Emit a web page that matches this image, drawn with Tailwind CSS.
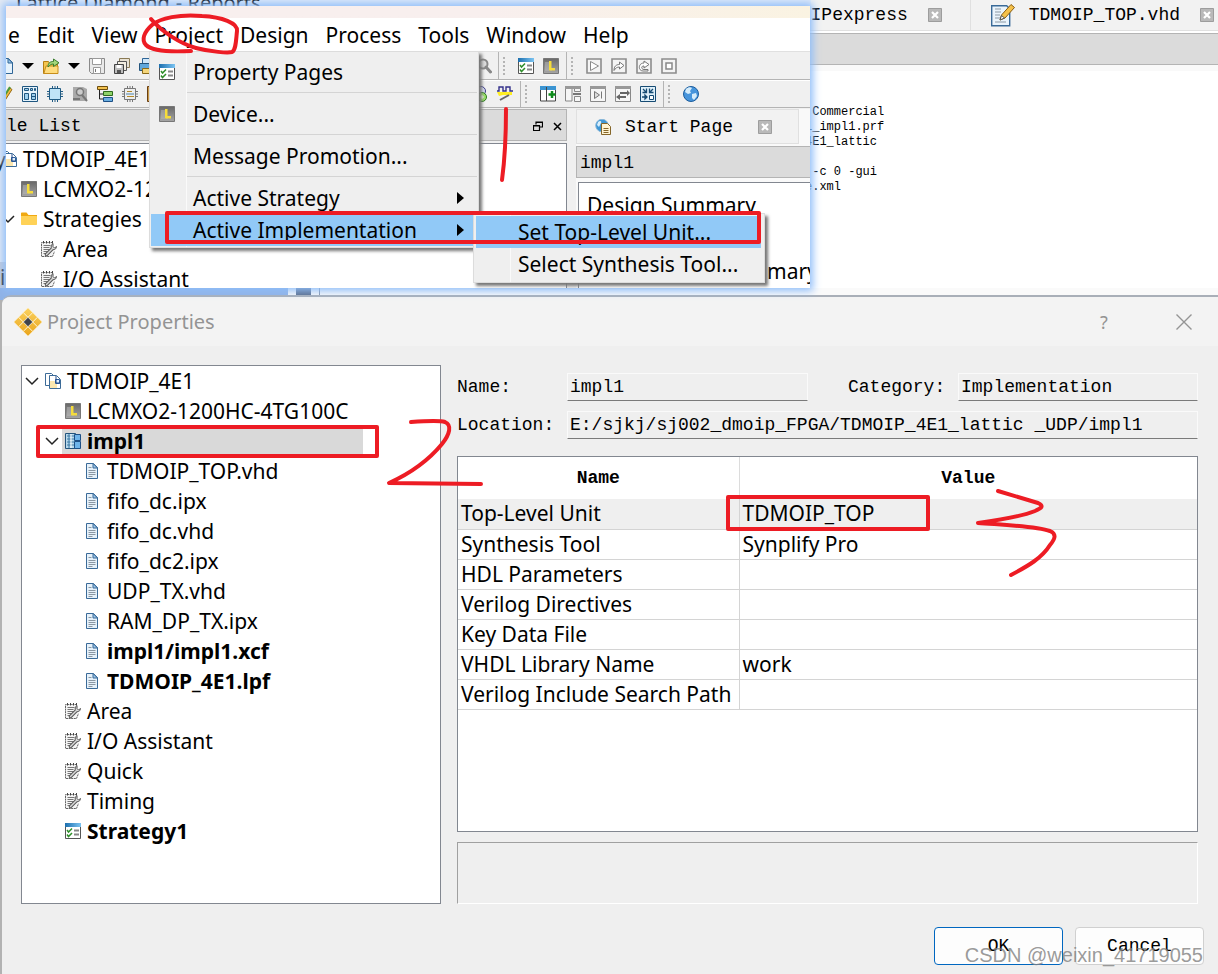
<!DOCTYPE html>
<html lang="en">
<head>
<meta charset="utf-8">
<title>Project Properties</title>
<script src="https://cdn.jsdelivr.net/npm/@tailwindcss/browser@4"></script>
</head>
<body class="relative min-h-screen overflow-hidden bg-white font-['Noto_Sans','Open_Sans',sans-serif] text-[21px] leading-[30px] text-black">

<svg class="absolute size-0" aria-hidden="true">
  <defs>
    <linearGradient id="gGray" x1="0" y1="0" x2="0" y2="1"><stop offset="0" stop-color="#686868"/><stop offset="1" stop-color="#a6a6a6"/></linearGradient>
    <linearGradient id="gBlue" x1="0" y1="0" x2="1" y2="0"><stop offset="0" stop-color="#1c6fae"/><stop offset="1" stop-color="#7cc4f2"/></linearGradient>
    <linearGradient id="gGold" x1="0" y1="0" x2="1" y2="1"><stop offset="0" stop-color="#fbd25f"/><stop offset="1" stop-color="#e9a41c"/></linearGradient>
  </defs>
  <symbol id="chev" viewBox="0 0 14 16"><path d="M1 5l6 6 6-6" fill="none" stroke="#222" stroke-width="1.5"/></symbol>
  <symbol id="proj" viewBox="0 0 16 16"><path d="M.5.5h6l2 2v10h-8z" fill="#fff" stroke="#3c6b98"/><path d="M4.500 2.500h7l4 4v9h-11z" fill="#fff" stroke="#3c6b98"/><path d="M5 8h7v7H5z" fill="#fbe7b0"/><path d="M10.500 6.500v4h4v-4z" fill="#dfeefb" stroke="#2d5d9a"/><path d="M11 3v7h4" fill="none" stroke="#224b8a"/></symbol>
  <symbol id="lchip" viewBox="0 0 16 16"><path d="M.5.5h15v15H.5z" fill="url(#gGray)" stroke="#777"/><path d="M3 4v9M5 4v9M8 13v-2" stroke="#bbb"/><path d="M6 3h2.500v7H12v2.500H6z" fill="#f5dc3c"/></symbol>
  <symbol id="impl" viewBox="0 0 16 16"><path d="M.5.5h10v15H.5z" fill="#b9d9ec" stroke="#24547c"/><path d="M2 3h7M2 6h7M2 9h7M2 12h7M4 1v14" stroke="#3f7ba5"/><path d="M6 1v14" stroke="#fff"/><path d="M9.500 1.500h6v6h-6zM9.500 8.500h6v7h-6z" fill="#6fb4ea" stroke="#1d4f86"/></symbol>
  <symbol id="file" viewBox="0 0 16 16"><path d="M.5.5h7l4 4v11H.5z" fill="#e6f1fa" stroke="#3a6a98"/><path d="M7 .5v4.500h4.500z" fill="#9cc7ea" stroke="#3a6a98"/><path d="M2.500 4.500h3M2.500 7.500h7M2.500 9.500h7M2.500 11.500h7M2.500 13.500h4" stroke="#8b98a4"/></symbol>
  <symbol id="strat" viewBox="0 0 16 16"><path d="M12 1.500H.5v14h11l2-5" fill="#f4f4f4" stroke="#666" stroke-dasharray="2 .6"/><path d="M2.500 0v2.500M5.500 0v2.500M8.500 0v2.500M11.500 0v2.500" stroke="#444"/><path d="M2.500 4.500h7M2.500 6.500h6M2.500 8.500h6M2.500 10.500h4M2.500 12.500h3" stroke="#777"/><path d="M5.500 13.500l6-6" stroke="#555" stroke-width="3.500" stroke-linecap="round"/><path d="M12 2.500c-2 1-2.500 3.500-1 5.500 2 1.500 4.500 0 4.500-2.500l-2 1.500-1.500-1.500z" fill="#ddd" stroke="#555"/><path d="M5.500 13.500l6-6" stroke="#d9d9d9" stroke-width="1.500" stroke-linecap="round"/></symbol>
  <symbol id="check" viewBox="0 0 16 16"><path d="M.5.5h15v15H.5z" fill="#fff" stroke="#555"/><path d="M0 0h16v4H0z" fill="url(#gBlue)"/><path d="M2 7l1.500 2L7 5.500M2 11.500l1.500 2L7 10" fill="none" stroke="#2f8f2a" stroke-width="1.500"/><path d="M9 7.500h5M9 11.500h5" stroke="#888" stroke-width="2"/></symbol>
  <symbol id="folder" viewBox="0 0 16 16"><path d="M0 2.500c0-.6.4-1 1-1h4.500L7.500 4H16v4H0z" fill="#f0a912"/><path d="M0 5h15c.6 0 1 .4 1 1v7c0 .6-.4 1-1 1H1c-.6 0-1-.4-1-1z" fill="#ffd257"/></symbol>
  <symbol id="close" viewBox="0 0 14 14"><path d="M.5.5h13v13H.5z" fill="#b9b9b9" stroke="#9d9d9d"/><path d="M4 4l6 6M10 4l-6 6" stroke="#fff" stroke-width="2.200"/></symbol>
  <symbol id="down" viewBox="0 0 12 8"><path d="M0 1h12L6 7z"/></symbol>
  <symbol id="new" viewBox="0 0 16 16"><path d="M3.500.5h8l4 4v11h-12z" fill="#e5f2fc" stroke="#2f6596"/><path d="M11 .5V5h4.500z" fill="#9cc9ec" stroke="#2f6596"/></symbol>
  <symbol id="open" viewBox="0 0 16 16"><path d="M.5 3.500h5l1 2h8v10H.5z" fill="#f4c550" stroke="#b67f12"/><path d="M1 15L3 8h12v7.500H1z" fill="#ffdc7d" stroke="#c78d1a"/><path d="M5 9c0-4 2-5.500 5.500-5.500V1L16 4.800 10.500 8.500V6C8 6 7 7 5 9z" fill="#a5d77a" stroke="#3b7c2e"/></symbol>
  <symbol id="save" viewBox="0 0 16 16"><path d="M.5.5h15v15H2.500l-2-2z" fill="#e9e9e9" stroke="#8a8a8a"/><path d="M3.500.5h9v6h-9zM4.500 9.500h7v6h-7z" fill="#fff" stroke="#9a9a9a"/><path d="M6.500 11v3" stroke="#777"/></symbol>
  <symbol id="saveall" viewBox="0 0 16 16"><path d="M5.500.5h10v9h-10z" fill="#e8e2d5" stroke="#8a7a55"/><path d="M3.500 3.500h9v9h-9z" fill="#f3eee2" stroke="#555"/><path d="M.5 6.500h9v9h-9z" fill="#bdbdbd" stroke="#444"/><path d="M2.500 7h5v3h-5z" fill="#fff"/><path d="M3 12h4v3H3z" fill="#555"/></symbol>
  <symbol id="print" viewBox="0 0 16 16"><path d="M3.500.5h10v5h-10z" fill="#cfe7fa" stroke="#2f6596"/><path d="M.5 5.500h15v7H.5z" fill="#5fa7dc" stroke="#24547c"/><path d="M3.500 10.500h10v5h-10z" fill="#f4d67b" stroke="#8a6a1a"/></symbol>
  <symbol id="search" viewBox="0 0 16 16"><circle cx="7" cy="6" r="4.500" fill="#ddd" stroke="#888" stroke-width="2"/><path d="M10 9l4.500 5" stroke="#888" stroke-width="3" stroke-linecap="round"/></symbol>
  <symbol id="play" viewBox="0 0 16 16"><path d="M1 1h14v14H1z" fill="#f4f4f4" stroke="#8c8c8c" stroke-width="1.600"/><path d="M4.500 3.500v9l8-4.500z" fill="#fff" stroke="#888"/></symbol>
  <symbol id="redo" viewBox="0 0 16 16"><path d="M1 1h14v14H1z" fill="#f4f4f4" stroke="#8c8c8c" stroke-width="1.600"/><path d="M3 12.500c0-4 2-6 5.500-6V4L13 7.500 8.500 11V9C6 9 4.500 10 3 12.500z" fill="#fff" stroke="#777"/></symbol>
  <symbol id="rerun" viewBox="0 0 16 16"><path d="M1 1h14v14H1z" fill="#f4f4f4" stroke="#8c8c8c" stroke-width="1.600"/><path d="M8 5V3l5 3.500L8 10V8c-3-.5-3 3.500 0 3.500h4v1.500H7C2 13 2 5 8 5z" fill="#fff" stroke="#777"/></symbol>
  <symbol id="stop" viewBox="0 0 16 16"><path d="M1 1h14v14H1z" fill="#f4f4f4" stroke="#8c8c8c" stroke-width="1.600"/><path d="M5 5h6v6H5z" fill="#fff" stroke="#888" stroke-width="1.500"/></symbol>
  <symbol id="pencil" viewBox="0 0 16 16"><path d="M4 15L13 2l2 1.500L7 16z" fill="#f2b93f" stroke="#966a15"/><path d="M8 9l5-8" stroke="#4a9a3a" stroke-width="2"/></symbol>
  <symbol id="plan" viewBox="0 0 16 16"><path d="M.5.5h15v15H.5z" fill="#e6f3fb" stroke="#1f5680"/><path d="M2.500 2.500h4v2h-4zM8.500 2.500h2v2h-2zM12.500 2.500h1v2h-1zM2.500 7.500h4v6h-4zM9.500 7.500h4v6h-4z" fill="#9fd0ee" stroke="#1f5680"/><path d="M9 10.500h5" stroke="#1f5680"/></symbol>
  <symbol id="chip" viewBox="0 0 16 16"><path d="M5.500 0v16M8 0v16M10.500 0v16M0 5.500h16M0 8h16M0 10.500h16" stroke="#215b83"/><path d="M2.500 2.500h11v11h-11z" fill="#bfe3f7" stroke="#215b83"/></symbol>
  <symbol id="chipg" viewBox="0 0 16 16"><path d="M5.500 0v16M8 0v16M10.500 0v16M0 5.500h16M0 8h16M0 10.500h16" stroke="#777"/><path d="M2.500 2.500h11v11h-11z" fill="#eee" stroke="#777"/><path d="M5 5.500h5M5 10.500h7" stroke="#b48a2a"/><path d="M4 8h8" stroke="#4c84ab"/></symbol>
  <symbol id="find" viewBox="0 0 16 16"><path d="M1 1h10l4 2v12H1z" fill="#aaa"/><circle cx="8" cy="6" r="3.500" fill="#ccc" stroke="#777" stroke-width="1.500"/><path d="M10 9l5 6M1 13h7" stroke="#777" stroke-width="2"/></symbol>
  <symbol id="hier" viewBox="0 0 16 16"><path d="M2.500 3v10H8M2.500 8H7" fill="none" stroke="#222"/><path d="M.5.5h10v3H.5z" fill="#f2c14e" stroke="#6d4d0d"/><path d="M6.500 5.500h9v4h-9z" fill="#8fd36a" stroke="#2d6a1e"/><path d="M6.500 11.500h9v4h-9z" fill="#6aaee0" stroke="#1d4f86"/></symbol>
  <symbol id="box" viewBox="0 0 16 16"><path d="M.5.5h15v15H.5z" fill="#c89a4a" stroke="#6a3f12"/></symbol>
  <symbol id="greens" viewBox="0 0 16 16"><circle cx="9" cy="5" r="4.500" fill="#d9ddf5" stroke="#3b3b8a"/><circle cx="10" cy="11" r="4.500" fill="#9ae06a" stroke="#2b7a1e"/><path d="M8 11h4M10 9v4" stroke="#fff"/></symbol>
  <symbol id="wave" viewBox="0 0 16 16"><path d="M0 5h2V1h4v4h3V1h4v4h3" fill="none" stroke="#33308a" stroke-width="1.400"/><path d="M0 6h15v3H6L2 10z" fill="#ffee22"/><path d="M3 14l9-5" stroke="#666" stroke-width="2"/></symbol>
  <symbol id="winadd" viewBox="0 0 16 16"><path d="M.5.5h15v14.500H.5z" fill="#fff" stroke="#444"/><path d="M0 0h16v4H0z" fill="#3b94d2"/><path d="M6.500 1v14" stroke="#444"/><path d="M12 5v7M8.500 8.500h7" stroke="#0d8a1a" stroke-width="2.500"/></symbol>
  <symbol id="winsplit" viewBox="0 0 16 16"><path d="M.5.5h6.500v14.500H.5zM9.500.5h6v5h-6zM9.500 10.500h6v5h-6z" fill="#f6f6f6" stroke="#888"/><path d="M0 0h16v3H0z" fill="#999"/><path d="M8 8h8" stroke="#777" stroke-width="2"/></symbol>
  <symbol id="winnext" viewBox="0 0 16 16"><path d="M.5.5h15v15H.5z" fill="#f6f6f6" stroke="#888"/><path d="M0 0h16v3H0z" fill="#999"/><path d="M4.500 5.500v7l5-3.500zM11.500 5.500v7" fill="#ddd" stroke="#777"/></symbol>
  <symbol id="winswap" viewBox="0 0 16 16"><path d="M.5.5h15v15H.5z" fill="#f6f6f6" stroke="#888"/><path d="M0 0h16v3H0z" fill="#999"/><path d="M5 7h8M3 11h8" stroke="#666" stroke-width="2"/><path d="M12 4v6l3-3zM5 8v6l-4-3z" fill="#666"/></symbol>
  <symbol id="merge" viewBox="0 0 16 16"><path d="M.5.5h15v15H.5z" fill="#dff0fa" stroke="#164b73"/><path d="M3 3l3 3M13 3l-3 3M2 11h4.500M5 9v4l2-2zM6.500 2.500v4h-4M9.500 2.500v4h4" fill="none" stroke="#164b73" stroke-width="1.300"/><path d="M9.500 9.500h4v4h-4z" fill="#fff" stroke="#164b73"/></symbol>
  <symbol id="globe" viewBox="0 0 16 16"><circle cx="8" cy="8" r="7.500" fill="#4795dc" stroke="#1b5c9c"/><path d="M3 3c2-2 5-2 6-1L7 5l1 2-3 1-3-2zM9 8l4-1 1 3-3 4-2-2z" fill="#d6ecfa"/></symbol>
  <symbol id="start" viewBox="0 0 16 16"><circle cx="7" cy="6.500" r="6.300" fill="#3f97d6" stroke="#8cb8d8"/><path d="M3 3c2-2 4-1 3 1L4 8 2 6z" fill="#d8eefb"/><path d="M6.500 4.500h6l3 3v8h-9z" fill="#fff3d2" stroke="#85662a"/><path d="M8.500 9.500h5M8.500 11.500h5M8.500 13.500h5" stroke="#85662a"/></symbol>
  <symbol id="edit" viewBox="0 0 24 24"><path d="M.7 2.700h15l3 3v17H.7z" fill="#eaf4fc" stroke="#3a6a98" stroke-width="1.400"/><path d="M4 6h6M4 9h6M4 12h5M4 15h5M4 19h11" stroke="#8b98a4"/><path d="M9 17l1.500-5L20 1.500l3.500 3L14 15z" fill="#f5c14a" stroke="#8a5d10"/><path d="M9 17l1.500-4.500 3 2.500z" fill="#fff" stroke="#555"/></symbol>
</svg>

<!-- Main window behind the other two -->
<main class="relative font-['Liberation_Mono',monospace] text-[18px]">
  <div class="flex h-[31px] items-start justify-end overflow-hidden border-b border-[#e0e0e0] bg-[#f2f2f2]">
    <div class="flex h-full min-w-0 flex-1 items-start gap-[6px] bg-[#e4ecf8] pl-4 font-['Noto_Sans',sans-serif] text-[20px] leading-[6px]">
      <span>Lattice Diamond</span><span>- Reports</span>
    </div>
    <div class="flex h-full items-center gap-5 pr-7"><span>IPexpress</span><svg class="size-[14px]"><use href="#close"/></svg></div>
    <div class="flex h-full items-center gap-[14px] border-l border-[#e0e0e0] pr-1 pl-5"><svg class="size-6"><use href="#edit"/></svg><span>TDMOIP_TOP.vhd</span><svg class="ml-[6px] size-[14px]"><use href="#close"/></svg></div>
  </div>
  <div class="mt-[2px] h-8 border-y border-[#b4b4b4] bg-[#dbdbdb]"></div>
  <div class="h-[6px] bg-[#f9f9f9]"></div>
  <pre class="mt-[34px] ml-[805px] font-['Liberation_Mono',monospace] text-[12px] leading-[15px]"> Commercial
1_impl1.prf
4E1_lattic

 -c 0 -gui
e.xml</pre>
</main>
<div class="absolute inset-y-0 left-0 w-2 overflow-hidden bg-[#e6ebf3] pt-[145px]" aria-hidden="true">
  <div class="-ml-[5px]">y</div>
  <div class="mt-[87px] h-8 bg-[#c5cad6]">i</div>
  <div class="h-[700px] bg-[#b2b2b2]"></div>
</div>
<div class="absolute inset-x-0 top-[288px] flex h-3 bg-[#fafafa]" aria-hidden="true"><div class="w-[288px] bg-[#8fb2e6]"></div><div class="ml-2 w-[15px] bg-[#5b6d8b]"></div><div class="ml-2 w-px bg-[#8794a8]"></div></div>

<!-- Project Properties dialog -->
<section class="absolute inset-y-0 top-[295px] right-0 left-[2px] flex flex-col rounded-tl-[9px] border-t-2 border-t-[#a9afb8] bg-[#efefef]" aria-labelledby="dlg-title">
  <header class="flex h-[49px] items-center rounded-tl-[8px] bg-[#f3f3f3] pr-[22px] pl-3 text-[#949494]">
    <svg class="size-7" viewBox="0 0 28 28" aria-hidden="true">
      <g transform="rotate(45 14 14)" fill="url(#gGold)" stroke="#fff3cf" stroke-width=".6"><path d="M4 4h6.600v6.600H4zM10.700 4h6.600v6.600h-6.600zM17.400 4H24v6.600h-6.600zM4 10.700h6.600v6.600H4zM17.400 10.700H24v6.600h-6.600zM4 17.400h6.600V24H4zM10.700 17.400h6.600V24h-6.600zM17.400 17.400H24V24h-6.600z"/><path d="M10.700 10.700h6.600v6.600h-6.600z" fill="#3f434c"/></g>
    </svg>
    <h1 id="dlg-title" class="ml-[5px] text-[20px]">Project Properties</h1>
    <button class="ml-auto w-6 text-[18px]" aria-label="Help">?</button>
    <button class="ml-14 flex size-6 items-center justify-center" aria-label="Close"><svg class="size-4" viewBox="0 0 16 16"><path d="M.5.5l15 15M15.500.5l-15 15" stroke="#949494" stroke-width="1.400"/></svg></button>
  </header>

  <div class="flex flex-1 gap-4 pt-[19px] pr-5 pb-[70px] pl-[19px]">
    <ul class="w-[420px] shrink-0 border border-[#828790] bg-white">
      <li class="flex h-[30px] items-center pl-[3px]"><svg class="h-4 w-[14px]"><use href="#chev"/></svg><svg class="mr-[6px] ml-[6px] size-4"><use href="#proj"/></svg>TDMOIP_4E1</li>
      <li class="flex h-[30px] items-center pl-[43px]"><svg class="mr-[6px] size-4"><use href="#lchip"/></svg>LCMXO2-1200HC-4TG100C</li>
      <li class="flex h-[30px] items-center pl-[23px] font-bold"><svg class="h-4 w-[14px]"><use href="#chev"/></svg><div class="ml-[3px] flex h-[26px] w-[301px] items-center bg-[#d9d9d9] pl-[3px]"><svg class="mr-[6px] size-4"><use href="#impl"/></svg>impl1</div></li>
      <li class="flex h-[30px] items-center pl-[64px]"><svg class="mr-2 h-4 w-[13px]"><use href="#file" width="16" height="16"/></svg>TDMOIP_TOP.vhd</li>
      <li class="flex h-[30px] items-center pl-[64px]"><svg class="mr-2 h-4 w-[13px]"><use href="#file" width="16" height="16"/></svg>fifo_dc.ipx</li>
      <li class="flex h-[30px] items-center pl-[64px]"><svg class="mr-2 h-4 w-[13px]"><use href="#file" width="16" height="16"/></svg>fifo_dc.vhd</li>
      <li class="flex h-[30px] items-center pl-[64px]"><svg class="mr-2 h-4 w-[13px]"><use href="#file" width="16" height="16"/></svg>fifo_dc2.ipx</li>
      <li class="flex h-[30px] items-center pl-[64px]"><svg class="mr-2 h-4 w-[13px]"><use href="#file" width="16" height="16"/></svg>UDP_TX.vhd</li>
      <li class="flex h-[30px] items-center pl-[64px]"><svg class="mr-2 h-4 w-[13px]"><use href="#file" width="16" height="16"/></svg>RAM_DP_TX.ipx</li>
      <li class="flex h-[30px] items-center pl-[64px] font-bold"><svg class="mr-2 h-4 w-[13px]"><use href="#file" width="16" height="16"/></svg>impl1/impl1.xcf</li>
      <li class="flex h-[30px] items-center pl-[64px] font-bold"><svg class="mr-2 h-4 w-[13px]"><use href="#file" width="16" height="16"/></svg>TDMOIP_4E1.lpf</li>
      <li class="flex h-[30px] items-center pl-[43px]"><svg class="mr-[6px] size-4"><use href="#strat"/></svg>Area</li>
      <li class="flex h-[30px] items-center pl-[43px]"><svg class="mr-[6px] size-4"><use href="#strat"/></svg>I/O Assistant</li>
      <li class="flex h-[30px] items-center pl-[43px]"><svg class="mr-[6px] size-4"><use href="#strat"/></svg>Quick</li>
      <li class="flex h-[30px] items-center pl-[43px]"><svg class="mr-[6px] size-4"><use href="#strat"/></svg>Timing</li>
      <li class="flex h-[30px] items-center pl-[43px] font-bold"><svg class="mr-[6px] size-4"><use href="#check"/></svg>Strategy1</li>
    </ul>

    <div class="flex min-w-0 flex-1 flex-col pt-2">
      <div class="flex flex-col gap-[10px] font-['Liberation_Mono',monospace] text-[18px] leading-7">
        <div class="flex items-center">
          <label for="f-name" class="w-[110px]">Name:</label>
          <input id="f-name" readonly value="impl1" class="h-7 w-[241px] border border-[#fafafa] border-b-[#7a7a7a] bg-[#efefef] px-[2px]">
          <label for="f-cat" class="ml-10 w-[110px]">Category:</label>
          <input id="f-cat" readonly value="Implementation" class="h-7 min-w-0 flex-1 border border-[#fafafa] border-b-[#7a7a7a] bg-[#efefef] px-[2px]">
        </div>
        <div class="flex items-center">
          <label for="f-loc" class="w-[110px]">Location:</label>
          <input id="f-loc" readonly value="E:/sjkj/sj002_dmoip_FPGA/TDMOIP_4E1_lattic _UDP/impl1" class="h-7 min-w-0 flex-1 border border-[#fafafa] border-b-[#7a7a7a] bg-[#efefef] px-[2px]">
        </div>
      </div>
      <div class="mt-[17px] flex-1 border border-[#828790] bg-white">
        <table class="w-full table-fixed border-collapse">
          <colgroup><col class="w-[281px]"><col></colgroup>
          <thead class="font-['Liberation_Mono',monospace] text-[18px]"><tr class="h-[42px]"><th class="border-r border-[#dcdcdc]">Name</th><th>Value</th></tr></thead>
          <tbody class="leading-[29px]">
            <tr class="h-[30px] border-b border-[#d4d4d4] bg-[#efefef]"><td class="border-r border-[#d4d4d4] pl-[3px] whitespace-nowrap">Top-Level Unit</td><td class="pl-[3px]">TDMOIP_TOP</td></tr>
            <tr class="h-[30px] border-b border-[#d4d4d4]"><td class="border-r border-[#d4d4d4] pl-[3px] whitespace-nowrap">Synthesis Tool</td><td class="pl-[3px]">Synplify Pro</td></tr>
            <tr class="h-[30px] border-b border-[#d4d4d4]"><td class="border-r border-[#d4d4d4] pl-[3px] whitespace-nowrap">HDL Parameters</td><td></td></tr>
            <tr class="h-[30px] border-b border-[#d4d4d4]"><td class="border-r border-[#d4d4d4] pl-[3px] whitespace-nowrap">Verilog Directives</td><td></td></tr>
            <tr class="h-[30px] border-b border-[#d4d4d4]"><td class="border-r border-[#d4d4d4] pl-[3px] whitespace-nowrap">Key Data File</td><td></td></tr>
            <tr class="h-[30px] border-b border-[#d4d4d4]"><td class="border-r border-[#d4d4d4] pl-[3px] whitespace-nowrap">VHDL Library Name</td><td class="pl-[3px]">work</td></tr>
            <tr class="h-[30px] border-b border-[#d4d4d4]"><td class="border-r border-[#d4d4d4] pl-[3px] whitespace-nowrap">Verilog Include Search Path</td><td></td></tr>
          </tbody>
        </table>
      </div>
      <div class="mt-[10px] h-[62px] border border-t-[#a0a0a0] border-r-white border-b-white border-l-[#a0a0a0]"></div>
    </div>
  </div>
  <footer class="absolute right-[14px] bottom-[9px] flex gap-3 font-['Liberation_Mono',monospace] text-[18px]">
    <button class="h-[38px] w-[129px] rounded-[4px] border border-[#0067c0] bg-[#fdfdfd]">OK</button>
    <button class="h-[38px] w-[129px] rounded-[4px] border border-[#d0d0d0] bg-[#fdfdfd]">Cancel</button>
  </footer>
</section>

<!-- Floating view of the main window with the Project menu open -->
<section class="absolute top-[6px] left-[6px] h-[282px] w-[804px] bg-[#f0f0f0] shadow-[0_0_8px_3px_#8fbdf9]">
  <div class="flex h-full flex-col overflow-hidden">
    <div class="h-3 shrink-0 bg-linear-to-r from-[#f8efee] from-60% to-[#faf3e2]"></div>
    <nav class="flex h-[33px] shrink-0 items-center gap-[17px] bg-white pl-[2px]">
      <button>e</button><button>Edit</button><button>View</button><button>Project</button><button>Design</button><button>Process</button><button>Tools</button><button>Window</button><button>Help</button>
    </nav>
    <div class="flex h-[29px] shrink-0 items-center border-t border-b border-t-[#e0e0e0] border-b-[#b4b4b4]">
      <div class="flex w-[492px] shrink-0 items-center gap-[9px]">
        <svg class="-ml-[9px] size-4"><use href="#new"/></svg><svg class="h-2 w-3"><use href="#down"/></svg><svg class="size-4"><use href="#open"/></svg><svg class="h-2 w-3"><use href="#down"/></svg><svg class="size-4"><use href="#save"/></svg><svg class="size-4"><use href="#saveall"/></svg><svg class="size-4"><use href="#print"/></svg><svg class="mr-[6px] ml-auto size-4"><use href="#search"/></svg>
      </div>
      <div class="flex h-full items-center gap-[9px] border-l border-[#b4b4b4] pl-1"><i class="mr-1 h-[18px] border-l-2 border-dotted border-[#b4b4b4]"></i><svg class="size-4"><use href="#check"/></svg><svg class="size-4"><use href="#lchip"/></svg></div>
      <div class="ml-[7px] flex h-full items-center gap-[9px] border-l border-[#b4b4b4] pl-1"><i class="mr-1 h-[18px] border-l-2 border-dotted border-[#b4b4b4]"></i><svg class="size-4"><use href="#play"/></svg><svg class="size-4"><use href="#redo"/></svg><svg class="size-4"><use href="#rerun"/></svg><svg class="size-4"><use href="#stop"/></svg></div>
    </div>
    <div class="flex h-[28px] shrink-0 items-center border-t border-b border-t-white border-b-[#b4b4b4]">
      <div class="flex w-[514px] shrink-0 items-center gap-[9px]">
        <svg class="-ml-[9px] size-4"><use href="#pencil"/></svg><svg class="size-4"><use href="#plan"/></svg><svg class="size-4"><use href="#chip"/></svg><svg class="size-4"><use href="#find"/></svg><svg class="size-4"><use href="#hier"/></svg><svg class="size-4"><use href="#chipg"/></svg><svg class="size-4"><use href="#box"/></svg><svg class="ml-auto size-4"><use href="#greens"/></svg><svg class="mr-[7px] size-4"><use href="#wave"/></svg>
      </div>
      <div class="flex h-full items-center gap-[9px] border-l border-[#b4b4b4] pl-1"><i class="mr-1 h-[18px] border-l-2 border-dotted border-[#b4b4b4]"></i><svg class="size-4"><use href="#winadd"/></svg><svg class="size-4"><use href="#winsplit"/></svg><svg class="size-4"><use href="#winnext"/></svg><svg class="size-4"><use href="#winswap"/></svg><svg class="size-4"><use href="#merge"/></svg></div>
      <div class="ml-[7px] flex h-full items-center border-l border-[#b4b4b4] pl-1"><i class="mr-[13px] h-[18px] border-l-2 border-dotted border-[#b4b4b4]"></i><svg class="size-4"><use href="#globe"/></svg></div>
    </div>
    <div class="flex min-h-0 flex-1 pt-px">
      <div class="flex w-[561px] shrink-0 flex-col">
        <div class="flex h-8 shrink-0 items-center border-t border-r border-b border-[#b4b4b4] bg-[#dbdbdb] pt-[2px] pr-1 font-['Liberation_Mono',monospace] text-[18px]">le List
          <button class="ml-auto" aria-label="Float"><svg class="size-[10px]" viewBox="0 0 10 10"><path d="M3 3.500V1h6.500v5H7M3 1.500h6M.5 4.500h6v5h-6zM.5 5h6" fill="none" stroke="#000" stroke-width="1.200"/></svg></button>
          <button class="ml-[10px]" aria-label="Close panel"><svg class="size-[9px]" viewBox="0 0 9 9"><path d="M1 1l7 7M8 1L1 8" stroke="#000" stroke-width="1.500"/></svg></button>
        </div>
        <div class="mt-[2px] min-h-0 flex-1 overflow-hidden border-t border-r border-[#828790] bg-white">
          <ul class="-ml-7">
            <li class="flex h-[30px] items-center pl-[23px]"><svg class="mr-[6px] size-4"><use href="#proj"/></svg>TDMOIP_4E1</li>
            <li class="flex h-[30px] items-center pl-[43px]"><svg class="mr-[6px] size-4"><use href="#lchip"/></svg>LCMXO2-1200HC</li>
            <li class="flex h-[30px] items-center pl-[23px]"><svg class="mr-[6px] h-4 w-[14px]"><use href="#chev"/></svg><svg class="mr-[6px] size-4"><use href="#folder"/></svg>Strategies</li>
            <li class="flex h-[30px] items-center pl-[63px]"><svg class="mr-[6px] size-4"><use href="#strat"/></svg>Area</li>
            <li class="flex h-[30px] items-center pl-[63px]"><svg class="mr-[6px] size-4"><use href="#strat"/></svg>I/O Assistant</li>
          </ul>
        </div>
      </div>
      <div class="ml-[9px] flex min-w-0 flex-1 flex-col bg-[#f9f9f9] font-['Liberation_Mono',monospace] text-[18px]">
        <div class="flex h-[35px] w-[223px] items-center border border-[#e0e0e0] bg-[#f2f2f2] pl-[18px]"><svg class="mr-[14px] size-4"><use href="#start"/></svg>Start Page<svg class="mr-[26px] ml-auto size-[14px]"><use href="#close"/></svg></div>
        <div class="mt-[2px] flex h-8 shrink-0 items-center border border-r-0 border-[#b4b4b4] bg-[#dbdbdb] pt-[2px] pl-[3px]">impl1</div>
        <div class="mt-1 ml-[2px] flex-1 border-t border-l border-[#828790] bg-white pt-[7px] pl-2 font-['Noto_Sans',sans-serif] text-[21px]">
          <div>Design Summary</div>
          <div class="mt-9 ml-[180px]">mary</div>
        </div>
      </div>
    </div>
  </div>

  <div class="absolute top-[45px] left-[143px] w-[330px] border border-[#dcdcdc] bg-[#efefef] px-px pt-1 pb-px shadow-[3px_3px_3px_#777]" role="menu">
    <div class="absolute inset-y-0 left-9 w-px bg-[#fafafa]"></div>
    <button role="menuitem" class="relative flex h-8 w-full items-center"><svg class="mr-[18px] ml-2 size-4"><use href="#check"/></svg>Property Pages</button>
    <hr class="mt-1 mb-[5px] ml-9 border-[#d4d4d4]">
    <button role="menuitem" class="relative flex h-8 w-full items-center"><svg class="mr-[18px] ml-2 size-4"><use href="#lchip"/></svg>Device...</button>
    <hr class="mt-1 mb-[5px] ml-9 border-[#d4d4d4]">
    <button role="menuitem" class="relative flex h-8 w-full items-center pl-[42px]">Message Promotion...</button>
    <hr class="mt-1 mb-[5px] ml-9 border-[#d4d4d4]">
    <button role="menuitem" class="relative flex h-8 w-full items-center justify-between pr-[13px] pl-[42px]">Active Strategy<svg class="h-3 w-[7px]" viewBox="0 0 7 12"><path d="M0 0l7 6-7 6z"/></svg></button>
    <button role="menuitem" class="relative flex h-8 w-full items-center justify-between bg-[#91c9f7] pr-[13px] pl-[42px]">Active Implementation<svg class="h-3 w-[7px]" viewBox="0 0 7 12"><path d="M0 0l7 6-7 6z"/></svg></button>
  </div>
  <div class="absolute top-[207px] left-[467px] w-[292px] border border-[#dcdcdc] bg-[#efefef] py-[2px] pr-[3px] pl-[2px] shadow-[3px_3px_3px_#777]" role="menu">
    <div class="absolute inset-y-0 left-9 w-px bg-[#fafafa]"></div>
    <button role="menuitem" class="relative flex h-8 w-full items-center bg-[#91c9f7] pl-[42px]">Set Top-Level Unit...</button>
    <button role="menuitem" class="relative flex h-8 w-full items-center pl-[42px]">Select Synthesis Tool...</button>
  </div>
</section>

<!-- Hand-drawn annotations -->
<svg class="pointer-events-none absolute top-0 left-0 h-[974px] w-[1218px]" viewBox="0 0 1218 974" fill="none" stroke="#ed1c24" stroke-width="4" stroke-linecap="round" stroke-linejoin="round" aria-hidden="true">
  <path d="M151 19C162 32 181 44 196 48C211 52 228 53 232 52C236 50 236 40 237 31C238 23 222 17 202 16C180 14 160 18 152 25C144 32 141 40 146 45C152 51 172 52 191 51"/>
  <path d="M506 109C506 135 505 158 502 180"/>
  <path d="M167 213h592v29H167z"/>
  <path d="M38 427h339v29H38z"/>
  <path d="M728 497h200v32H728z"/>
  <path d="M411 422C425 421 439 420 445 422C452 425 450 434 442 444C428 461 409 474 389 483L481 484"/>
  <path d="M998 491L1038 503C1044 506 1042 508 1035 511C1020 517 1000 520 978 523C1005 525 1036 526 1050 531C1057 534 1055 539 1050 545C1042 558 1028 566 1011 575"/>
</svg>
<div class="pointer-events-none absolute right-[15px] bottom-1 font-['Liberation_Sans',sans-serif] text-[20px] text-[#808080]/80">CSDN @weixin_41719055</div>
</body>
</html>
